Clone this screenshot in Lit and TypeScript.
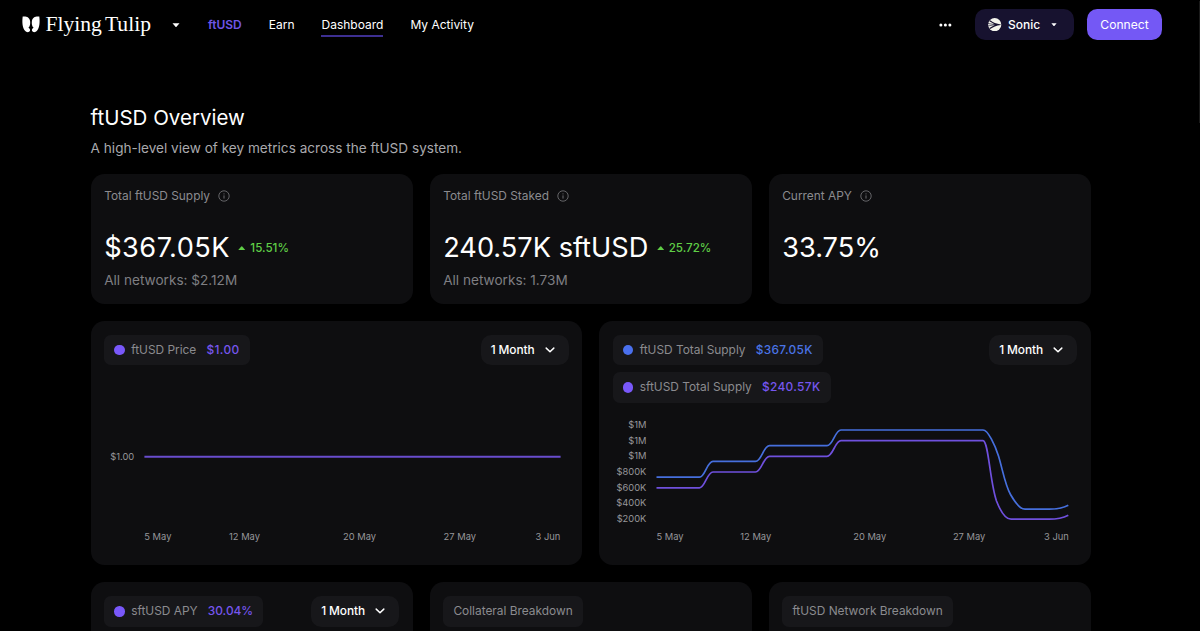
import { LitElement, html, svg, css } from "lit";
import { customElement, property } from "lit/decorators.js";

const chevron = html`<svg class="chev" viewBox="0 0 10 6" width="10" height="6"><path d="M1.2 1.1 L5 4.7 L8.8 1.1" fill="none" stroke="#fff" stroke-width="1.5" stroke-linecap="round" stroke-linejoin="round"/></svg>`;
const caret = (w: number, h: number) => html`<svg width=${w} height=${h} viewBox="0 0 8 4.4"><path d="M.5 .2H7.5L4.5 3.8Q4 4.3 3.5 3.8Z" fill="#fff"/></svg>`;

@customElement("legend-chip")
export class LegendChip extends LitElement {
  @property() label = "";
  @property() value = "";
  @property() tone = "";
  static styles = css`
    :host { display: flex; align-items: center; height: 30.6px; padding: 0 10.2px; border-radius: 6.8px; background: #17171a; font-size: 11.9px; color: #8b8b8f; white-space: nowrap; box-sizing: border-box; }
    .label, .value { padding-bottom: 1px; }
    .dot { width: 10.6px; height: 10.6px; border-radius: 50%; margin-right: 6.2px; }
    .dot.violet { background: #7958fa; }
    .dot.blue { background: #4a70ee; }
    .value { margin-left: 10.2px; font-weight: 500; }
    .value.money { letter-spacing: 0.33px; }
    .value.violet { color: #7656ee; }
    .value.blue { color: #4a74e6; }
  `;
  render() {
    return html`
      ${this.tone ? html`<span class="dot ${this.tone}"></span>` : ""}
      <span class="label">${this.label}</span>
      ${this.value ? html`<span class="value ${this.tone} ${this.value.startsWith("$") ? "money" : ""}">${this.value}</span>` : ""}`;
  }
}

@customElement("period-select")
export class PeriodSelect extends LitElement {
  static styles = css`
    :host { display: flex; align-items: center; justify-content: space-between; box-sizing: border-box; width: 88px; height: 30.6px; padding: 0 14px 0 10.2px; border-radius: 10.2px; background: #17171a; color: #fff; font-size: 11.9px; letter-spacing: -0.1px; font-weight: 500; white-space: nowrap; }
    span { padding-bottom: 1px; }
    .chev { display: block; }
  `;
  render() {
    return html`<span>1 Month</span>${chevron}`;
  }
}

@customElement("stat-card")
export class StatCard extends LitElement {
  @property() label = "";
  @property() value = "";
  @property() change = "";
  @property() note = "";
  static styles = css`
    :host { display: flex; flex-direction: column; box-sizing: border-box; height: 130.4px; padding: 13.6px; border-radius: 13.6px; background: #0e0e10; white-space: nowrap; }
    .label { display: flex; align-items: center; gap: 7.6px; height: 17px; font-size: 11.9px; color: #8b8b8f; }
    .row { display: flex; align-items: center; height: 34px; margin-top: 26px; }
    .value { font-size: 27.2px; color: #fff; }
    .value.money { letter-spacing: 0.45px; }
    .change { display: flex; align-items: center; gap: 4.6px; margin-left: 8.3px; padding-top: 1px; color: #5fce46; font-size: 11.6px; font-weight: 500; }
    .note { margin-top: 8px; font-size: 13.6px; line-height: 17px; color: #7f7f83; }
    svg { display: block; }
  `;
  render() {
    return html`
      <div class="label"><span>${this.label}</span>
        <svg width="12" height="12" viewBox="0 0 12 12" fill="none" stroke="#6d6d71"><circle cx="6" cy="6" r="5.2" stroke-width="0.9"/><path d="M6 5.4V8.6" stroke-width="1"/><path d="M6 3.4V4.4" stroke-width="1"/></svg>
      </div>
      <div class="row"><span class="value ${this.value.startsWith("$") ? "money" : ""}">${this.value}</span>
        ${this.change ? html`<span class="change"><svg width="7.5" height="4" viewBox="0 0 7 4"><path d="M0 4L3 .5Q3.5 0 4 .5L7 4Z" fill="#5fce46"/></svg>${this.change}</span>` : ""}
      </div>
      ${this.note ? html`<div class="note">${this.note}</div>` : ""}`;
  }
}

@customElement("app-root")
export class AppRoot extends LitElement {
  static styles = css`
    :host { display: block; position: relative; height: 631px; overflow: hidden; background: #000; font-family: Inter, "Liberation Sans", sans-serif; color: #fff; }
    .thumb { position: absolute; right: 0; top: 1px; width: 1.5px; height: 122px; background: #1b1b1b; }
    .bar { display: flex; align-items: center; height: 49px; padding: 0 38px 0 22px; font-size: 12px; white-space: nowrap; }
    .logo { display: flex; align-items: center; gap: 5.5px; width: 149px; }
    .word { font-family: "Liberation Serif", serif; font-size: 21.6px; line-height: 24px; padding-bottom: 1px; word-spacing: -2px; }
    .menu { display: flex; margin-left: 1.3px; width: 35.7px; padding-top: 1px; }
    nav { display: flex; gap: 27px; }
    nav span { display: flex; align-items: center; height: 25px; box-sizing: border-box; border-bottom: 2px solid transparent; border-top: 2px solid transparent; }
    nav .brand { color: #7056e8; font-weight: 600; }
    nav .on { border-bottom-color: #3d2f91; }
    .right { display: flex; align-items: center; margin-left: auto; }
    .more { margin-right: 22.5px; }
    .chain { display: flex; align-items: center; box-sizing: border-box; width: 99px; height: 30.6px; padding: 0 17px 0 13.5px; border-radius: 10.2px; background: #17122f; }
    .chain .name { margin: 0 auto 0 6.5px; font-weight: 500; }
    .connect { display: flex; align-items: center; justify-content: center; width: 75px; height: 30.6px; margin-left: 13.4px; border-radius: 10.2px; background: #7458f5; font-size: 12.1px; }
    svg { display: block; }
    main { width: 1000px; margin-left: 90.6px; padding-top: 55px; }
    h1 { margin: 0; font-size: 20.5px; line-height: 27px; font-weight: 400; }
    .sub { margin: 9px 0 0; font-size: 13.6px; line-height: 17px; color: #a9a9ad; }
    .three, .two { display: grid; grid-template-columns: repeat(3, 1fr); gap: 17px; }
    .three.stats { margin-top: 16.8px; }
    .two { grid-template-columns: 1fr 1fr; margin: 17px 0; }
    .panel { box-sizing: border-box; height: 244.2px; padding: 13.6px; border-radius: 13.6px; background: #0e0e10; display: flex; flex-direction: column; justify-content: space-between; overflow: hidden; }
    .head { display: flex; align-items: flex-start; justify-content: space-between; }
    .chips { display: flex; flex-direction: column; align-items: flex-start; gap: 6.8px; }
    .plot { margin: 0 -13.6px -13.6px; }
    .plot text { font-size: 9.35px; fill: #96969a; stroke: none; }
  `;

  private axis(x0: number, days: [string, number][], ticks: [string, number][]) {
    return svg`
      ${days.map(([t, x]) => svg`<text x=${x} y="137">${t}</text>`)}
      ${ticks.map(([t, y]) => svg`<text x=${x0} y=${y} text-anchor="end">${t}</text>`)}`;
  }

  render() {
    return html`
      <header class="bar">
        <div class="logo">
          <svg width="18" height="18" viewBox="0 0 18 18" fill="#fff"><path d="M.7 .6C3.8 0 7.6 1.1 8.1 5C8.4 7.900 8.200 10.200 6.400 11.700C7.600 12.200 8.300 13.400 8 14.800C7.200 16.700 4.300 16.500 3 14.800C.3 11.600 0 5.900 .7 .6Z"/><path d="M17.300 .6C14.200 0 10.400 1.100 9.900 5C9.600 7.900 9.800 10.200 11.600 11.700C10.400 12.200 9.700 13.400 10 14.800C10.800 16.700 13.700 16.500 15 14.800C17.700 11.600 18 5.900 17.300 .6Z"/></svg>
          <span class="word">Flying Tulip</span>
        </div>
        <div class="menu">${caret(8, 4.4)}</div>
        <nav><span class="brand">ftUSD</span><span>Earn</span><span class="on">Dashboard</span><span>My Activity</span></nav>
        <div class="right">
          <svg class="more" width="13" height="4" viewBox="0 0 13 4" fill="#fff"><circle cx="1.9" cy="2" r="1.5"/><circle cx="6.4" cy="2" r="1.5"/><circle cx="10.9" cy="2" r="1.5"/></svg>
          <div class="chain">
            <svg width="13.4" height="13.4" viewBox="0 0 13 13"><circle cx="6.5" cy="6.5" r="6.4" fill="#f4f4ec"/><path d="M2.2 2.2Q6 5.4 12.4 6.2V6.8Q6 7.6 2.2 10.8L1.3 9.8Q4.5 7.9 7 6.5Q4.5 5.1 1.3 3.2Z" fill="#17122f"/><path d="M0 5.3L7 6.5L0 7.7" fill="none" stroke="#17122f" stroke-width=".6"/></svg>
            <span class="name">Sonic</span>${caret(6, 3.6)}
          </div>
          <div class="connect">Connect</div>
        </div>
      </header>
      <main>
        <h1>ftUSD Overview</h1>
        <p class="sub">A high-level view of key metrics across the ftUSD system.</p>
        <section class="three stats">
          <stat-card label="Total ftUSD Supply" value="$367.05K" change="15.51%" note="All networks: $2.12M"></stat-card>
          <stat-card label="Total ftUSD Staked" value="240.57K sftUSD" change="25.72%" note="All networks: 1.73M"></stat-card>
          <stat-card label="Current APY" value="33.75%"></stat-card>
        </section>
        <section class="two">
          <div class="panel">
            <div class="head"><div class="chips"><legend-chip label="ftUSD Price" value="$1.00" tone="violet"></legend-chip></div><period-select></period-select></div>
            <svg class="plot" width="491.5" height="162" viewBox="0 0 491.5 162">
              <path d="M53.4 53.7H469.6" stroke="#694dcd" stroke-width="2"/>
              ${this.axis(43.2, [["5 May", 53.3], ["12 May", 138], ["20 May", 252], ["27 May", 352.6], ["3 Jun", 444.6]], [["$1.00", 57.1]])}
            </svg>
          </div>
          <div class="panel">
            <div class="head"><div class="chips">
              <legend-chip label="ftUSD Total Supply" value="$367.05K" tone="blue"></legend-chip>
              <legend-chip label="sftUSD Total Supply" value="$240.57K" tone="violet"></legend-chip>
            </div><period-select></period-select></div>
            <svg class="plot" width="491.5" height="162" viewBox="0 0 491.5 162" fill="none" stroke-width="1.7">
              <path stroke="#6f50dd" d="M57.5 84.8H100.5C106 84.8 108 69 114 69H156.5C162.500 69 164.500 53.300 170.500 53.300H228C234 53.300 236 37.700 242 37.700H384C389.500 37.800 391 80 397.500 98C401 107 405.500 116.200 412 116.200H450C457 116.200 464 115 469.300 112.200"/>
              <path stroke="#466fdd" d="M57.5 74.2H100.5C106 74.2 108 58.4 114 58.4H156.5C162.500 58.400 164.500 42.700 170.500 42.700H228C234 42.700 236 27 242 27H384C389 27 396 42 399.500 53C403.500 66 406 82 411.500 91.500C417 101 421.500 106.200 426 106.200H450C457 106.200 464 105 469.300 102.200"/>
              ${this.axis(47.4, [["5 May", 57.4], ["12 May", 141.3], ["20 May", 254.2], ["27 May", 353.9], ["3 Jun", 445]], [["$1M", 25], ["$1M", 40.7], ["$1M", 56.4], ["$800K", 72], ["$600K", 87.7], ["$400K", 103.4], ["$200K", 119]])}
            </svg>
          </div>
        </section>
        <section class="three">
          <div class="panel"><div class="head"><legend-chip label="sftUSD APY" value="30.04%" tone="violet"></legend-chip><period-select></period-select></div></div>
          <div class="panel"><div class="head"><legend-chip label="Collateral Breakdown"></legend-chip></div></div>
          <div class="panel"><div class="head"><legend-chip label="ftUSD Network Breakdown"></legend-chip></div></div>
        </section>
      </main>
      <div class="thumb"></div>`;
  }
}
